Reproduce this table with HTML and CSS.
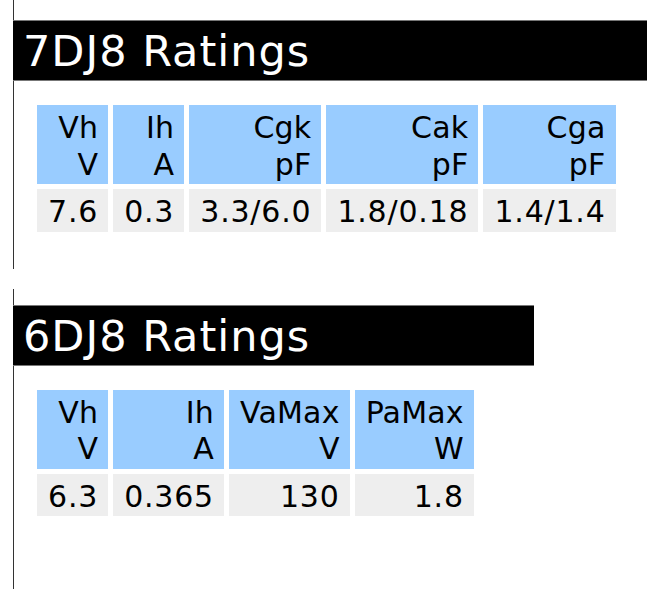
FILE: index.html
```html
<!DOCTYPE html>
<html>
<head>
<meta charset="utf-8">
<title>Tube Ratings</title>
<link rel="stylesheet" href="styles.css">
</head>
<body>
<div class="section">
  <h2 class="heading">7DJ8 Ratings</h2>
  <table class="ratings">
    <tr class="head">
      <td>Vh<br>V</td>
      <td>Ih<br>A</td>
      <td>Cgk<br>pF</td>
      <td>Cak<br>pF</td>
      <td>Cga<br>pF</td>
    </tr>
    <tr class="data">
      <td>7.6</td>
      <td>0.3</td>
      <td>3.3/6.0</td>
      <td>1.8/0.18</td>
      <td>1.4/1.4</td>
    </tr>
  </table>
</div>
<div class="section second">
  <h2 class="heading narrow">6DJ8 Ratings</h2>
  <table class="ratings">
    <tr class="head">
      <td>Vh<br>V</td>
      <td>Ih<br>A</td>
      <td>VaMax<br>V</td>
      <td>PaMax<br>W</td>
    </tr>
    <tr class="data">
      <td>6.3</td>
      <td>0.365</td>
      <td>130</td>
      <td>1.8</td>
    </tr>
  </table>
</div>
</body>
</html>
```
FILE: styles.css
```css
html, body {
  margin: 0;
  padding: 0;
  background: #ffffff;
}
body {
  padding-left: 13px;
  font-family: "DejaVu Sans", Verdana, sans-serif;
  color: #000000;
  overflow: hidden;
}
.section {
  border-left: 1px solid #333333;
  padding: 20px 0 32px 0;
}
.second {
  margin-top: 20px;
  padding-top: 16px;
  padding-bottom: 80px;
}
.heading {
  margin: 0 0 0 -1px;
  background: #000000;
  color: #ffffff;
  font-weight: normal;
  font-size: 43px;
  letter-spacing: 1px;
  line-height: 57px;
  height: 57px;
  padding: 2px 0 0 10px;
  border-top: 1px solid #777777;
  border-bottom: 1px solid #777777;
  white-space: nowrap;
}
.narrow {
  width: 511px;
}
.ratings {
  margin: 19px 0 0 18px;
  border-collapse: separate;
  border-spacing: 5px;
  font-size: 30px;
  line-height: 36.5px;
}
.ratings td {
  text-align: right;
  padding: 5px 10px 1px 11px;
  white-space: nowrap;
}
.head td {
  background: #99ccff;
  letter-spacing: 0.2px;
}
.data td {
  background: #eeeeee;
  letter-spacing: 0.8px;
}
```
